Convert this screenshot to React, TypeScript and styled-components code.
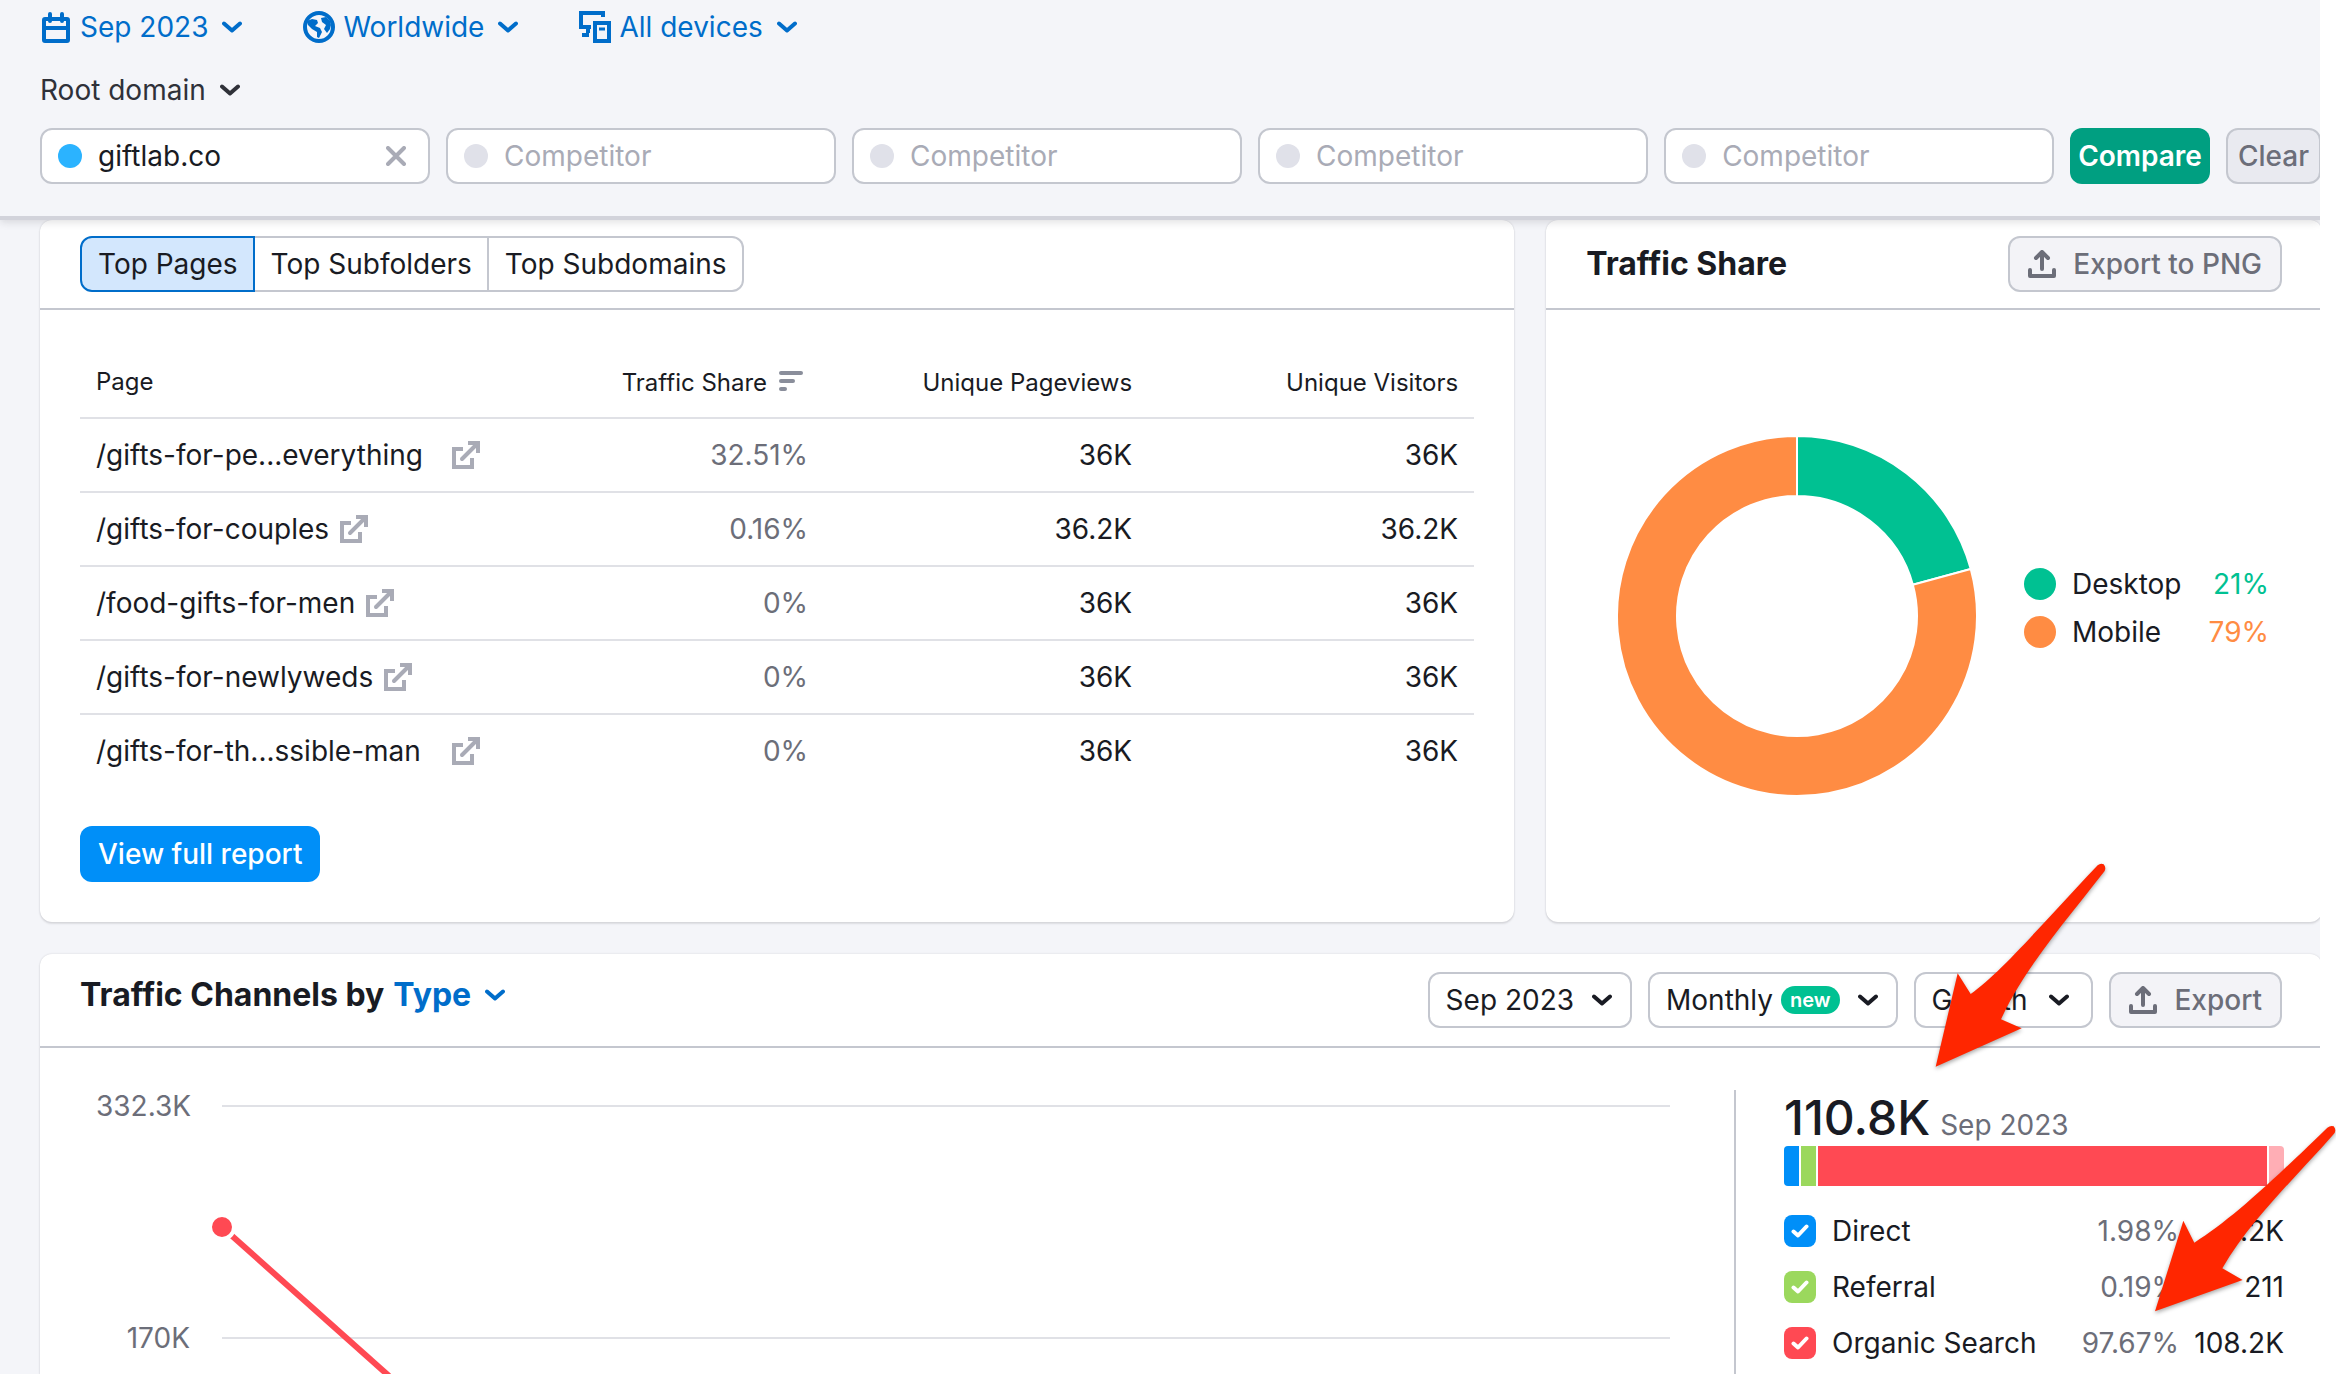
import React from "react";
import styled, { createGlobalStyle } from "styled-components";

const c = {
  bg: "#f4f5f9",
  text: "#191b23",
  muted: "#6c6e79",
  faint: "#a9abb6",
  border: "#c4c7cf",
  line: "#e0e1e6",
  link: "#006dca",
  blue: "#008ff8",
  green: "#009f81",
  mint: "#00c192",
  orange: "#ff8c43",
  red: "#ff4953",
  lime: "#9bd85d",
};

const GlobalStyle = createGlobalStyle`
  *, *::before, *::after { box-sizing: border-box; }
  html, body { margin: 0; background: #fff; }
  body, button, input, select {
    font-family: Inter, "Liberation Sans", sans-serif;
    font-size: 28px;
    line-height: 40px;
    color: ${c.text};
  }
`;

const Root = styled.div`
  position: relative;
  height: 100vh;
  overflow: hidden;
  padding-right: 16px;
`;

const Shell = styled.div`
  display: flex;
  flex-direction: column;
  height: 100%;
  overflow: hidden;
  background: ${c.bg};
`;

/* ---------- header ---------- */

const Header = styled.header`
  position: relative;
  z-index: 1;
  padding: 7px 0 32px 40px;
  background: ${c.bg};
  border-bottom: 4px solid #d2d3db;
  box-shadow: 0 2px 8px rgba(25, 27, 35, 0.14);
`;

const FilterRow = styled.div`
  display: flex;
  gap: 61px;
`;

const RootDomainRow = styled.div`
  display: flex;
  margin: 23px 0 18px;
`;

const Dropdown = styled.label<{ $color?: string }>`
  display: flex;
  align-items: center;
  color: ${(p) => p.$color ?? c.text};
  cursor: pointer;

  svg {
    flex: none;
  }
`;

const Select = styled.select<{ $before?: number; $after?: number }>`
  appearance: none;
  field-sizing: content;
  height: 40px;
  margin: 0 ${(p) => p.$after ?? 14}px 0 ${(p) => p.$before ?? 0}px;
  padding: 0;
  border: 0;
  background: transparent;
  color: inherit;
  font-size: inherit;
  font-weight: inherit;
  cursor: pointer;
`;

const DomainForm = styled.form`
  display: flex;
  gap: 16px;
  margin-right: -1px;
`;

const Field = styled.label`
  flex: 1 1 0;
  min-width: 0;
  display: flex;
  align-items: center;
  gap: 16px;
  height: 56px;
  padding: 0 22px 0 16px;
  background: #fff;
  border: 2px solid ${c.border};
  border-radius: 12px;
`;

const Dot = styled.span<{ $color: string; $size: number }>`
  flex: none;
  width: ${(p) => p.$size}px;
  height: ${(p) => p.$size}px;
  border-radius: 50%;
  background: ${(p) => p.$color};
`;

const TextInput = styled.input`
  flex: 1;
  min-width: 0;
  padding: 0;
  border: 0;
  outline: 0;
  background: transparent;

  &::placeholder {
    color: ${c.faint};
    opacity: 1;
  }
`;

const IconButton = styled.button`
  display: flex;
  padding: 0;
  border: 0;
  background: transparent;
  color: ${c.faint};
  cursor: pointer;
`;

const Button = styled.button<{ $kind: "success" | "primary" | "quiet" | "soft"; $pad: number }>`
  flex: none;
  display: flex;
  align-items: center;
  gap: 17px;
  height: 56px;
  padding: 0 ${(p) => p.$pad}px;
  border-radius: 12px;
  border: ${(p) => (p.$kind === "quiet" || p.$kind === "soft" ? `2px solid ${c.border}` : "0")};
  background: ${(p) => ({ success: c.green, primary: c.blue, quiet: "#e9eaf0", soft: "#f3f3f7" })[p.$kind]};
  color: ${(p) => (p.$kind === "quiet" || p.$kind === "soft" ? c.muted : "#fff")};
  font-weight: ${(p) => (p.$kind === "success" ? 600 : 500)};
  cursor: pointer;
`;

/* ---------- cards ---------- */

const Main = styled.main`
  flex: 1;
  display: flex;
  flex-direction: column;
  gap: 32px;
  margin: 0 -2px 0 40px;
`;

const TopGrid = styled.div`
  display: grid;
  grid-template-columns: minmax(0, 1.9fr) minmax(0, 1fr);
  gap: 32px;
`;

const Card = styled.section<{ $grow?: boolean }>`
  display: flex;
  flex-direction: column;
  flex: ${(p) => (p.$grow ? "1 0 auto" : "none")};
  min-width: 0;
  background: #fff;
  border-radius: ${(p) => (p.$grow ? "12px 12px 0 0" : "12px")};
  box-shadow: 0 0 2px rgba(25, 27, 35, 0.16), 0 2px 2px rgba(25, 27, 35, 0.1);
`;

const CardHeader = styled.div<{ $tall?: boolean }>`
  display: flex;
  align-items: ${(p) => (p.$tall ? "flex-start" : "center")};
  justify-content: space-between;
  padding: ${(p) => (p.$tall ? 18 : 16)}px 40px;
  border-bottom: 2px solid ${c.border};
`;

const CardTitle = styled.h2`
  display: flex;
  align-items: center;
  gap: 9px;
  margin: 0;
  padding: 3px 0;
  font-size: 32px;
  font-weight: 700;
  line-height: 40px;
`;

const Tabs = styled.div`
  display: flex;
`;

const Tab = styled.button<{ $active?: boolean }>`
  height: 56px;
  padding: 0 15px 0 16px;
  background: ${(p) => (p.$active ? "#d3e7fd" : "#fff")};
  border: 2px solid ${(p) => (p.$active ? c.link : c.border)};
  border-left-width: ${(p) => (p.$active ? 2 : 0)}px;
  cursor: pointer;

  &:first-child {
    border-radius: 12px 0 0 12px;
  }
  &:last-child {
    border-radius: 0 12px 12px 0;
  }
`;

const PagesBody = styled.div`
  padding: 36px 40px 40px;
`;

const Table = styled.table`
  width: 100%;
  margin-bottom: 37px;
  table-layout: fixed;
  border-collapse: separate;
  border-spacing: 0;
`;

const HeadCell = styled.th<{ $num?: boolean; $width?: string }>`
  width: ${(p) => p.$width ?? "auto"};
  height: 73px;
  padding: ${(p) => (p.$num ? 3 : 0)}px 16px 0;
  border-bottom: 2px solid ${c.line};
  font-size: 24px;
  font-weight: 400;
  line-height: 32px;
  text-align: ${(p) => (p.$num ? "right" : "left")};

  svg {
    margin: 0 3px 0 12px;
  }
`;

const Cell = styled.td<{ $num?: boolean; $muted?: boolean }>`
  height: 74px;
  padding: 0 ${(p) => (p.$muted ? 14 : 16)}px 0 16px;
  border-bottom: 2px solid ${c.line};
  text-align: ${(p) => (p.$num ? "right" : "left")};
  color: ${(p) => (p.$muted ? c.muted : c.text)};

  tr:last-child > & {
    border-bottom-color: transparent;
  }
`;

const PageLink = styled.a<{ $clipped?: boolean }>`
  display: flex;
  align-items: center;
  justify-content: space-between;
  gap: 11px;
  width: ${(p) => (p.$clipped ? "384px" : "fit-content")};
  color: inherit;
  text-decoration: none;

  svg {
    flex: none;
    color: ${c.faint};
  }
`;

const ShareBody = styled.div`
  flex: 1;
  display: flex;
  align-items: center;
  justify-content: space-between;
  padding: 0 53px 0 70px;
`;

const Legend = styled.ul`
  width: 245px;
  margin: 0 0 16px;
  padding: 0;
  list-style: none;
`;

const LegendItem = styled.li<{ $color: string }>`
  display: flex;
  align-items: center;
  gap: 16px;
  height: 48px;

  strong {
    margin-left: auto;
    font-weight: 400;
    color: ${(p) => p.$color};
  }
`;

/* ---------- channels ---------- */

const Controls = styled.div`
  display: flex;
  gap: 16px;
`;

const BoxedDropdown = styled(Dropdown)<{ $wide?: boolean }>`
  height: 56px;
  padding: 0 ${(p) => (p.$wide ? 22 : 18)}px 0 16px;
  background: #fff;
  border: 2px solid ${c.border};
  border-radius: 12px;
`;

const Badge = styled.span`
  height: 28px;
  margin-right: 18px;
  padding: 0 9px;
  border-radius: 14px;
  background: ${c.mint};
  color: #fff;
  font-size: 20px;
  font-weight: 600;
  line-height: 28px;
`;

const ChannelsBody = styled.div`
  flex: 1;
  display: grid;
  grid-template-columns: minmax(0, 1fr) 588px;
  padding-top: 42px;
`;

const ChartArea = styled.div`
  display: grid;
  grid-template-columns: 94px minmax(0, 1fr);
  column-gap: 32px;
  padding: 0 64px 0 56px;
`;

const Ticks = styled.div`
  display: flex;
  flex-direction: column;
  gap: 192px;
  margin-top: -4px;
  text-align: right;
  color: ${c.muted};
`;

const Plot = styled.svg`
  width: 100%;
  height: 284px;
  overflow: visible;
`;

const Summary = styled.aside`
  padding: 0 38px 0 48px;
  border-left: 2px solid ${c.border};
`;

const Total = styled.div`
  display: flex;
  align-items: baseline;
  gap: 10px;
  color: ${c.muted};

  strong {
    font-size: 48px;
    font-weight: 500;
    line-height: 56px;
    color: ${c.text};
  }
`;

const StackBar = styled.div`
  display: flex;
  gap: 2px;
  height: 40px;
  overflow: hidden;
  border-radius: 4px;
`;

const Segment = styled.span<{ $color: string; $grow?: boolean }>`
  flex: ${(p) => (p.$grow ? "1" : "0 0 15px")};
  background: ${(p) => p.$color};
`;

const ChannelTable = styled.table`
  width: 100%;
  margin-top: 17px;
  border-collapse: collapse;
`;

const ChannelCell = styled.td<{ $muted?: boolean; $first?: boolean }>`
  height: 56px;
  padding: 0;
  white-space: nowrap;
  text-align: ${(p) => (p.$first ? "left" : "right")};
  color: ${(p) => (p.$muted ? c.muted : c.text)};
  width: ${(p) => (p.$first ? "auto" : p.$muted ? "96px" : "105px")};
`;

const CheckLabel = styled.label`
  display: flex;
  align-items: center;
  gap: 16px;
`;

const CheckStack = styled.span`
  display: grid;
  place-items: center;

  > * {
    grid-area: 1 / 1;
  }
  svg {
    pointer-events: none;
  }
`;

const CheckBox = styled.input<{ $color: string }>`
  appearance: none;
  width: 32px;
  height: 32px;
  margin: 0;
  border-radius: 8px;
  background: ${(p) => p.$color};
`;

const Arrows = styled.svg`
  position: absolute;
  z-index: 2;
  top: 850px;
  right: 0;
  width: 406px;
  height: 500px;
  pointer-events: none;
  filter: drop-shadow(0 2px 2px rgba(0, 0, 0, 0.35));
`;

/* ---------- icons ---------- */

const Chevron = () => (
  <svg width="20" height="12" viewBox="0 0 20 12" fill="none" stroke="currentColor" strokeWidth="4" strokeLinecap="round" strokeLinejoin="round" aria-hidden="true">
    <path d="M2 2.5 10 9.5 18 2.5" />
  </svg>
);

const CalendarIcon = () => (
  <svg width="30" height="32" viewBox="0 0 30 32" fill="none" stroke="currentColor" strokeWidth="4" aria-hidden="true">
    <rect x="4" y="8" width="24" height="22" rx="1" />
    <path d="M4 17h24" />
    <path d="M10 3v7M22 3v7" strokeLinecap="round" />
  </svg>
);

const GlobeIcon = () => (
  <svg width="32" height="32" viewBox="0 0 32 32" fill="currentColor" aria-hidden="true">
    <circle cx="16" cy="16" r="14" fill="none" stroke="currentColor" strokeWidth="4" />
    <path d="M4 10 9 8l5 1 1 3-3 3 5 2 2 4-3 6-2-1v-5l-5-3-4-4Z" />
    <path d="M18 7l5-1 4 4 1 4-1 4-3 4-3-4 2-4-4-3Z" />
  </svg>
);

const DevicesIcon = () => (
  <svg width="32" height="32" viewBox="0 0 32 32" fill="none" stroke="currentColor" strokeWidth="4" aria-hidden="true">
    <path d="M24 6V2H2v14h10" />
    <path d="M3 24h7M7 20h4" />
    <rect x="16" y="12" width="14" height="18" />
    <path d="M20 18h6" strokeWidth="3" />
  </svg>
);

const CloseIcon = () => (
  <svg width="20" height="20" viewBox="0 0 20 20" fill="none" stroke="currentColor" strokeWidth="4" strokeLinecap="round" aria-hidden="true">
    <path d="M2 2 18 18M18 2 2 18" />
  </svg>
);

const ExportIcon = () => (
  <svg width="28" height="28" viewBox="0 0 28 28" fill="none" stroke="currentColor" strokeWidth="4" strokeLinecap="round" strokeLinejoin="round" aria-hidden="true">
    <path d="M2 20v6h24v-6" />
    <path d="M14 19V3M8 8l6-6 6 6" />
  </svg>
);

const SortIcon = () => (
  <svg width="24" height="20" viewBox="0 0 24 20" fill="#8a8e9b" aria-hidden="true">
    <rect width="24" height="4" rx="2" />
    <rect y="8" width="16" height="4" rx="2" />
    <rect y="16" width="8" height="4" rx="2" />
  </svg>
);

const ExternalIcon = () => (
  <svg width="28" height="28" viewBox="0 0 28 28" fill="none" stroke="currentColor" strokeWidth="4" aria-hidden="true">
    <path d="M11 8H2v18h18v-9" />
    <path d="M16 2h10v10" />
    <path d="M25 3 10 18" strokeLinecap="round" />
  </svg>
);

const CheckIcon = () => (
  <svg width="18" height="14" viewBox="0 0 18 14" fill="none" stroke="#fff" strokeWidth="4" strokeLinecap="round" strokeLinejoin="round" aria-hidden="true">
    <path d="M2.500 7.500 7 11.500 15.500 2.500" />
  </svg>
);

/* Ring slice between two shares of the circle, clockwise from the top. */
const slice = (from: number, to: number, outer = 180, inner = 120) => {
  const at = (share: number, r: number) => {
    const a = share * 2 * Math.PI;
    return `${181 + r * Math.sin(a)} ${181 - r * Math.cos(a)}`;
  };
  const large = to - from > 0.5 ? 1 : 0;
  return `M${at(from, outer)}A${outer} ${outer} 0 ${large} 1 ${at(to, outer)}L${at(to, inner)}A${inner} ${inner} 0 ${large} 0 ${at(from, inner)}Z`;
};

const Donut = () => (
  <svg width="362" height="362" viewBox="0 0 362 362" role="img" aria-label="Traffic share by device">
    <path d={slice(0, 0.208)} fill={c.mint} stroke="#fff" strokeWidth="2" />
    <path d={slice(0.208, 1)} fill={c.orange} stroke="#fff" strokeWidth="2" />
  </svg>
);

/* ---------- data ---------- */

const pages = [
  { name: "/gifts-for-pe...everything", clipped: true, share: "32.51%", views: "36K", visitors: "36K" },
  { name: "/gifts-for-couples", share: "0.16%", views: "36.2K", visitors: "36.2K" },
  { name: "/food-gifts-for-men", share: "0%", views: "36K", visitors: "36K" },
  { name: "/gifts-for-newlyweds", share: "0%", views: "36K", visitors: "36K" },
  { name: "/gifts-for-th...ssible-man", clipped: true, share: "0%", views: "36K", visitors: "36K" },
];

const devices = [
  { name: "Desktop", share: "21%", color: c.mint },
  { name: "Mobile", share: "79%", color: c.orange },
];

const channels = [
  { name: "Direct", share: "1.98%", visits: "2.2K", color: c.blue },
  { name: "Referral", share: "0.19%", visits: "211", color: c.lime },
  { name: "Organic Search", share: "97.67%", visits: "108.2K", color: c.red },
];

const Picker = ({ label, value, before, after }: { label: string; value: string; before?: number; after?: number }) => (
  <Select aria-label={label} $before={before} $after={after}>
    <option>{value}</option>
  </Select>
);

export default function App() {
  return (
    <Root>
      <GlobalStyle />
      <Shell>
        <Header>
          <FilterRow>
            <Dropdown $color={c.link}>
              <CalendarIcon />
              <Picker label="Month" value="Sep 2023" before={10} />
              <Chevron />
            </Dropdown>
            <Dropdown $color={c.link}>
              <GlobeIcon />
              <Picker label="Location" value="Worldwide" before={8} />
              <Chevron />
            </Dropdown>
            <Dropdown $color={c.link}>
              <DevicesIcon />
              <Picker label="Devices" value="All devices" before={8} />
              <Chevron />
            </Dropdown>
          </FilterRow>
          <RootDomainRow>
            <Dropdown $color="#2f3139">
              <Picker label="Scope" value="Root domain" />
              <Chevron />
            </Dropdown>
          </RootDomainRow>
          <DomainForm onSubmit={(e) => e.preventDefault()}>
            <Field>
              <Dot $color="#2bb3ff" $size={24} />
              <TextInput aria-label="Domain" defaultValue="giftlab.co" />
              <IconButton type="button" aria-label="Clear domain">
                <CloseIcon />
              </IconButton>
            </Field>
            {[1, 2, 3, 4].map((n) => (
              <Field key={n}>
                <Dot $color="#e0e1e9" $size={24} />
                <TextInput aria-label={`Competitor ${n}`} placeholder="Competitor" />
              </Field>
            ))}
            <Button type="submit" $kind="success" $pad={8}>Compare</Button>
            <Button type="button" $kind="quiet" $pad={10}>Clear</Button>
          </DomainForm>
        </Header>

        <Main>
          <TopGrid>
            <Card>
              <CardHeader>
                <Tabs>
                  <Tab type="button" $active>Top Pages</Tab>
                  <Tab type="button">Top Subfolders</Tab>
                  <Tab type="button">Top Subdomains</Tab>
                </Tabs>
              </CardHeader>
              <PagesBody>
                <Table>
                  <thead>
                    <tr>
                      <HeadCell>Page</HeadCell>
                      <HeadCell $num $width="326px">Traffic Share<SortIcon /></HeadCell>
                      <HeadCell $num $width="326px">Unique Pageviews</HeadCell>
                      <HeadCell $num $width="326px">Unique Visitors</HeadCell>
                    </tr>
                  </thead>
                  <tbody>
                    {pages.map((p) => (
                      <tr key={p.name}>
                        <Cell>
                          <PageLink href="#" $clipped={p.clipped}>
                            {p.name}
                            <ExternalIcon />
                          </PageLink>
                        </Cell>
                        <Cell $num $muted>{p.share}</Cell>
                        <Cell $num>{p.views}</Cell>
                        <Cell $num>{p.visitors}</Cell>
                      </tr>
                    ))}
                  </tbody>
                </Table>
                <Button type="button" $kind="primary" $pad={18}>View full report</Button>
              </PagesBody>
            </Card>

            <Card>
              <CardHeader>
                <CardTitle>Traffic Share</CardTitle>
                <Button type="button" $kind="soft" $pad={18}>
                  <ExportIcon />
                  Export to PNG
                </Button>
              </CardHeader>
              <ShareBody>
                <Donut />
                <Legend>
                  {devices.map((d) => (
                    <LegendItem key={d.name} $color={d.color}>
                      <Dot $color={d.color} $size={32} />
                      {d.name}
                      <strong>{d.share}</strong>
                    </LegendItem>
                  ))}
                </Legend>
              </ShareBody>
            </Card>
          </TopGrid>

          <Card $grow>
            <CardHeader $tall>
              <CardTitle>
                Traffic Channels by
                <Dropdown $color={c.link}>
                  <Picker label="Group channels by" value="Type" />
                  <Chevron />
                </Dropdown>
              </CardTitle>
              <Controls>
                <BoxedDropdown>
                  <Picker label="Period" value="Sep 2023" after={18} />
                  <Chevron />
                </BoxedDropdown>
                <BoxedDropdown>
                  <Picker label="Granularity" value="Monthly" after={8} />
                  <Badge>new</Badge>
                  <Chevron />
                </BoxedDropdown>
                <BoxedDropdown $wide>
                  <Picker label="Trend" value="Growth" after={22} />
                  <Chevron />
                </BoxedDropdown>
                <Button type="button" $kind="soft" $pad={18}>
                  <ExportIcon />
                  Export
                </Button>
              </Controls>
            </CardHeader>
            <ChannelsBody>
              <ChartArea>
                <Ticks>
                  <span>332.3K</span>
                  <span>170K</span>
                </Ticks>
                <Plot role="img" aria-label="Organic search traffic">
                  <line x1="0" x2="100%" y1="16" y2="16" stroke={c.line} strokeWidth="2" />
                  <line x1="0" x2="100%" y1="248" y2="248" stroke={c.line} strokeWidth="2" />
                  <line x1="0" x2="167" y1="137" y2="286" stroke={c.red} strokeWidth="6" />
                  <circle cx="0" cy="137" r="12" fill={c.red} stroke="#fff" strokeWidth="4" />
                </Plot>
              </ChartArea>
              <Summary>
                <Total>
                  <strong>110.8K</strong>
                  Sep 2023
                </Total>
                <StackBar>
                  <Segment $color={c.blue} />
                  <Segment $color={c.lime} />
                  <Segment $color={c.red} $grow />
                  <Segment $color="#ffaeb5" />
                </StackBar>
                <ChannelTable>
                  <tbody>
                    {channels.map((ch) => (
                      <tr key={ch.name}>
                        <ChannelCell $first>
                          <CheckLabel>
                            <CheckStack>
                              <CheckBox type="checkbox" defaultChecked $color={ch.color} />
                              <CheckIcon />
                            </CheckStack>
                            {ch.name}
                          </CheckLabel>
                        </ChannelCell>
                        <ChannelCell $muted>{ch.share}</ChannelCell>
                        <ChannelCell>{ch.visits}</ChannelCell>
                      </tr>
                    ))}
                  </tbody>
                </ChannelTable>
              </Summary>
            </ChannelsBody>
          </Card>
        </Main>
      </Shell>
      <Arrows viewBox="0 0 1218 1500" fill="#ff2600" aria-hidden="true">
        <path d="M17 650 83 370 122 432C210 370 320 240 503 46Q512 38 521 43 529 52 524 63C400 222 280 360 213 508L275 535Z" />
        <path d="M675 1384 760 1112 793 1178C900 1110 1010 1010 1192 833Q1202 825 1211 829 1219 838 1214 849C1100 980 960 1110 877 1255L938 1290Z" />
      </Arrows>
    </Root>
  );
}
